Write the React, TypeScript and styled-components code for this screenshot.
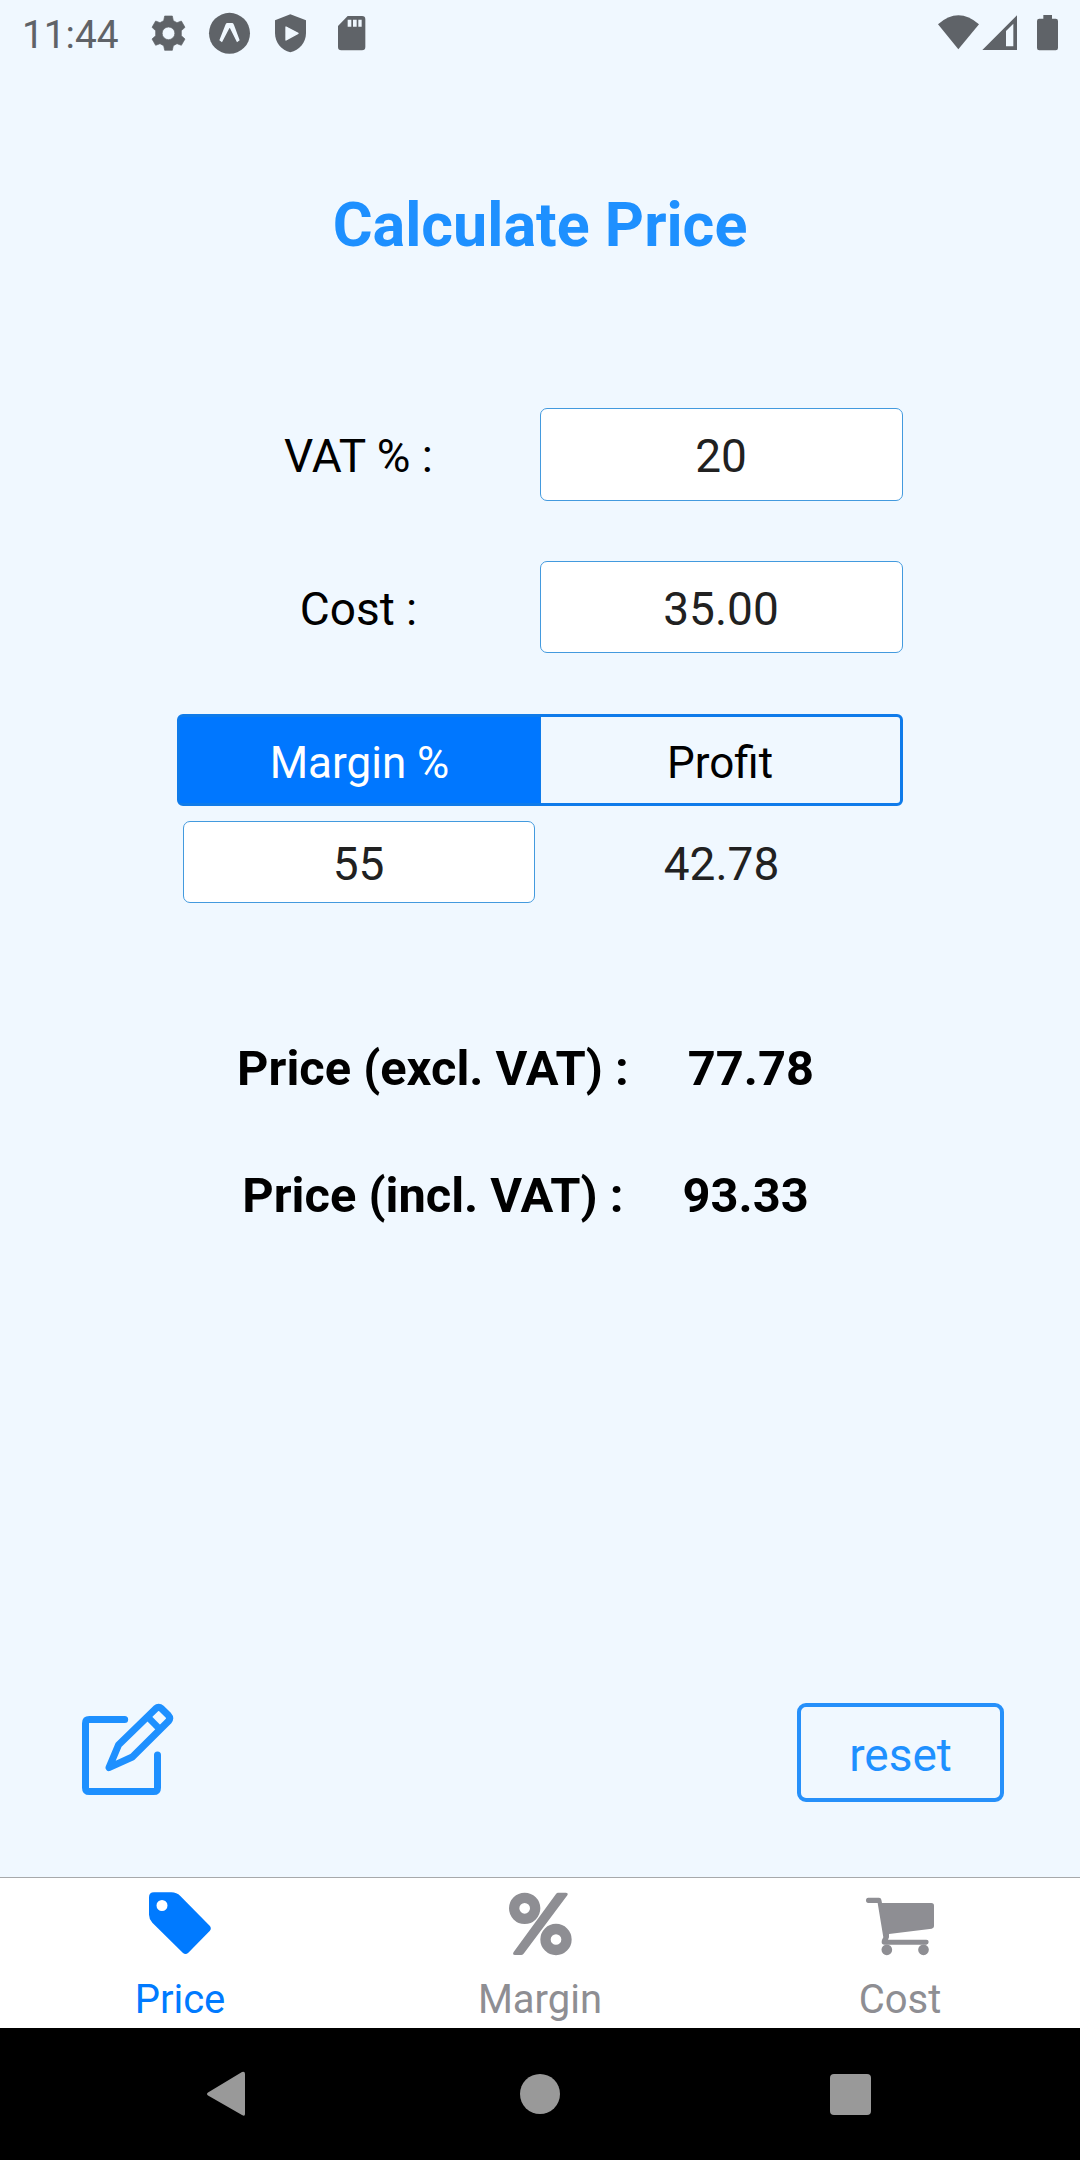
import React, { useState } from "react";
import styled, { createGlobalStyle } from "styled-components";

const GlobalStyle = createGlobalStyle`
  *, *::before, *::after { box-sizing: border-box; }
  body { margin: 0; background: #f0f8ff; }
  button, input { font: inherit; margin: 0; padding: 0; }
`;

const Screen = styled.div`
  display: flex;
  flex-direction: column;
  width: 1080px;
  height: 2160px;
  background: #f0f8ff;
  color: #000;
  font-family: Roboto, "Liberation Sans", sans-serif;
  font-size: 46px;
  svg { display: block; }
`;

const StatusBar = styled.header`
  display: flex;
  justify-content: space-between;
  height: 66px;
  padding: 0 18px 0 22px;
  color: #5f6368;
`;

const StatusGroup = styled.div`
  display: flex;
`;

const Clock = styled.span`
  width: 121px;
  padding-top: 2px;
  font-size: 38.8px;
  line-height: 66px;
`;

const Main = styled.main`
  display: flex;
  flex-direction: column;
  align-items: center;
  flex: 1;
`;

const Title = styled.h1`
  margin: 119px 0 0;
  font-size: 61px;
  line-height: 80px;
  font-weight: 700;
  color: #1e90ff;
`;

const Form = styled.div`
  display: grid;
  gap: 60px;
  width: 726px;
  margin-top: 143px;
`;

const Field = styled.label`
  display: grid;
  grid-template-columns: 1fr 1fr;
  align-items: start;
  height: 93px;
  text-align: center;
  line-height: 96px;
`;

const NumberInput = styled.input<{ $height: number }>`
  width: 100%;
  height: ${(p) => p.$height}px;
  padding: 3px 1px 0 0;
  border: 1px solid #439ade;
  border-radius: 7px;
  outline: none;
  background: #fff;
  color: #212121;
  text-align: center;
`;

const Segments = styled.div`
  display: grid;
  grid-template-columns: 1fr 1fr;
  width: 726px;
  height: 92px;
  margin-top: 60px;
  border: 3px solid #0f7bea;
  border-radius: 6px;
`;

const Segment = styled.button<{ $active: boolean }>`
  padding: 5px 1px 0 0;
  border: 0;
  border-left: ${(p) => (p.$active ? "0" : "1px solid #0f7bea")};
  font-size: 44px;
  background: ${(p) => (p.$active ? "#0077ff" : "transparent")};
  color: ${(p) => (p.$active ? "#fff" : "#000")};
`;

const SegmentValues = styled.div`
  display: grid;
  grid-template-columns: 1fr 1fr;
  width: 726px;
  margin-top: 15px;
`;

const SegmentCell = styled.div`
  padding: 0 5px 0 6px;
`;

const Computed = styled.div`
  padding-top: 2px;
  line-height: 82px;
  text-align: center;
  color: #212121;
`;

const Results = styled.div`
  display: flex;
  flex-direction: column;
  align-items: center;
  gap: 61px;
  margin: 131px 29px 0 0;
`;

const Result = styled.div`
  display: flex;
  gap: 59px;
  font-size: 48.8px;
  line-height: 66px;
  font-weight: 700;
`;

const Actions = styled.div`
  display: flex;
  justify-content: space-between;
  width: 100%;
  margin-top: auto;
  padding: 0 76px 75px 60px;
`;

const EditButton = styled.button`
  height: 99px;
  border: 0;
  background: none;
  color: #1e90ff;
`;

const ResetButton = styled.button`
  width: 207px;
  height: 99px;
  padding-top: 5px;
  border: 4px solid #2690fa;
  border-radius: 9px;
  background: none;
  color: #1e90ff;
`;

const TabBar = styled.nav`
  display: grid;
  grid-template-columns: repeat(3, 1fr);
  height: 151px;
  border-top: 1px solid #a7a9ab;
  background: #fff;
`;

const Tab = styled.button<{ $active?: boolean }>`
  display: flex;
  flex-direction: column;
  align-items: center;
  border: 0;
  background: none;
  font-size: 40px;
  color: ${(p) => (p.$active ? "#007aff" : "#8e8e93")};
`;

const TabIcon = styled.span`
  height: 87px;
  padding-top: 7px;
`;

const TabLabel = styled.span`
  line-height: 70px;
`;

const SystemNav = styled.footer`
  display: grid;
  grid-template-columns: 1fr auto 1fr;
  align-items: center;
  height: 132px;
  padding: 0 209px 0 206px;
  background: #000;
  color: #999;
  svg:nth-child(2) { margin-left: 3px; }
  svg:last-child { justify-self: end; }
`;

const StatusIcons = () => (
  <svg width="227" height="66" viewBox="429 0 681 198" fill="currentColor">
    <path
      fillRule="evenodd"
      d="M494 48h23l3 14 11 6 13-5 11 19-11 10v15l11 10-11 19-13-5-11 6-3 14h-23l-3-14-11-6-13 5-11-19 11-10V92l-11-10 11-19 13 5 11-6zM505.500 81a19 19 0 1 0 0 38 19 19 0 1 0 0-38z"
      stroke="currentColor"
      strokeWidth="2"
      strokeLinejoin="round"
    />
    <circle cx="688.500" cy="100" r="61.500" />
    <path
      d="M681 69H697Q700 69 702 75L719 121L711 127L690 85Q689 83 688 85L666 127L658 121L676 75Q678 69 681 69z"
      fill="#f0f8ff"
    />
    <path d="M871 43l47 18v38c0 29-20 51-47 58-27-7-46-29-46-58V61z" />
    <path d="M858 81v39l36-20z" fill="#f0f8ff" stroke="#f0f8ff" strokeWidth="4" strokeLinejoin="round" />
    <path
      fillRule="evenodd"
      d="M1043 48h43q10 0 10 10v83q0 10-10 10h-62q-10 0-10-10V78zM1043 59v21h11V59zM1059 59v21h11V59zM1075 59v21h10V59z"
    />
  </svg>
);

const SignalIcons = () => (
  <svg width="124" height="66" viewBox="114 0 372 198" fill="currentColor">
    <path d="M114 73Q175 19 237 73L175 148z" />
    <path fillRule="evenodd" d="M351 46v104H247zM340 71l-22 22v46h22z" />
    <path d="M430 45h26v11h11q7 0 7 7v81q0 7-7 7h-49q-7 0-7-7V63q0-7 7-7h12z" />
  </svg>
);

const EditIcon = () => (
  <svg
    width="140"
    height="126"
    viewBox="0 69 420 378"
    fill="none"
    stroke="currentColor"
    strokeWidth="21"
    strokeLinecap="round"
    strokeLinejoin="round"
  >
    <path d="M194 118.500H88Q76.500 118.500 76.500 130V323Q76.500 334.500 88 334.500H281Q292.500 334.500 292.500 323V225" />
    <path d="M147 263L176 194L287 86Q296 78 305 86L325 106Q333 115 325 124L217 231Z" />
    <path d="M268 116L297 145" strokeWidth="20" strokeLinecap="butt" />
  </svg>
);

const TagIcon = () => (
  <svg width="64" height="72" viewBox="144 60 192 216" fill="currentColor">
    <path
      fillRule="evenodd"
      d="M162 82H214Q230 82 241 93L329 182Q336 190 329 198L265 263Q257 271 249 264L157 173Q147 162 147 149V97Q147 82 162 82zM186 105a16.500 16.500 0 1 0 0 33 16.500 16.500 0 1 0 0-33z"
    />
  </svg>
);

const PercentIcon = () => (
  <svg width="64" height="72" viewBox="144 60 192 216" fill="none" stroke="currentColor" strokeWidth="31">
    <circle cx="194" cy="130" r="31.500" />
    <circle cx="288" cy="223.500" r="31.500" />
    <path
      d="M294 83H317Q326 83 322 91L192 265Q189 270 184 270H165Q156 270 161 261L288 87Q291 83 294 83z"
      fill="currentColor"
      stroke="none"
    />
  </svg>
);

const CartIcon = () => (
  <svg width="72" height="72" viewBox="132 60 216 216" fill="currentColor">
    <path d="M145 98H177Q183 98 184 104L186 114H334Q342 114 342 122V184Q342 190 335 191L207 207V217L204 224H319Q326 224 326 231T319 239H193Q185 239 185 231Q185 225 190 217L173 114H145Q138 114 138 106T145 98z" />
    <circle cx="200.500" cy="254.500" r="16" />
    <circle cx="310.500" cy="254.500" r="16" />
  </svg>
);

const BackIcon = () => (
  <svg width="40" height="46" viewBox="0 0 40 46" fill="currentColor">
    <path d="M2 21.500L36 1Q39 0 39 3V43Q39 46 36 44L2 24.500Q0 23 2 21.500z" />
  </svg>
);

const HomeIcon = () => (
  <svg width="42" height="42" viewBox="0 0 42 42" fill="currentColor">
    <circle cx="21" cy="21" r="20" />
  </svg>
);

const RecentIcon = () => (
  <svg width="41" height="41" viewBox="0 0 41 41" fill="currentColor">
    <rect width="41" height="41" rx="4" />
  </svg>
);

const tabs = [
  { label: "Price", Icon: TagIcon },
  { label: "Margin", Icon: PercentIcon },
  { label: "Cost", Icon: CartIcon },
];

export default function App() {
  const [vat, setVat] = useState("20");
  const [cost, setCost] = useState("35.00");
  const [margin, setMargin] = useState("55");
  const price = Number(cost) / (1 - Number(margin) / 100);

  const reset = () => {
    setVat("20");
    setCost("35.00");
    setMargin("55");
  };

  return (
    <Screen>
      <GlobalStyle />
      <StatusBar>
        <StatusGroup>
          <Clock>11:44</Clock>
          <StatusIcons />
        </StatusGroup>
        <SignalIcons />
      </StatusBar>
      <Main>
        <Title>Calculate Price</Title>
        <Form>
          <Field>
            VAT % :
            <NumberInput $height={93} value={vat} onChange={(e) => setVat(e.target.value)} />
          </Field>
          <Field>
            Cost :
            <NumberInput $height={92} value={cost} onChange={(e) => setCost(e.target.value)} />
          </Field>
        </Form>
        <Segments>
          <Segment $active>Margin %</Segment>
          <Segment $active={false}>Profit</Segment>
        </Segments>
        <SegmentValues>
          <SegmentCell>
            <NumberInput $height={82} value={margin} onChange={(e) => setMargin(e.target.value)} />
          </SegmentCell>
          <Computed>{(price - Number(cost)).toFixed(2)}</Computed>
        </SegmentValues>
        <Results>
          <Result>
            <span>Price (excl. VAT) :</span>
            <span>{price.toFixed(2)}</span>
          </Result>
          <Result>
            <span>Price (incl. VAT) :</span>
            <span>{(price * (1 + Number(vat) / 100)).toFixed(2)}</span>
          </Result>
        </Results>
        <Actions>
          <EditButton aria-label="Edit">
            <EditIcon />
          </EditButton>
          <ResetButton onClick={reset}>reset</ResetButton>
        </Actions>
      </Main>
      <TabBar>
        {tabs.map(({ label, Icon }, i) => (
          <Tab key={label} $active={i === 0}>
            <TabIcon>
              <Icon />
            </TabIcon>
            <TabLabel>{label}</TabLabel>
          </Tab>
        ))}
      </TabBar>
      <SystemNav>
        <BackIcon />
        <HomeIcon />
        <RecentIcon />
      </SystemNav>
    </Screen>
  );
}
